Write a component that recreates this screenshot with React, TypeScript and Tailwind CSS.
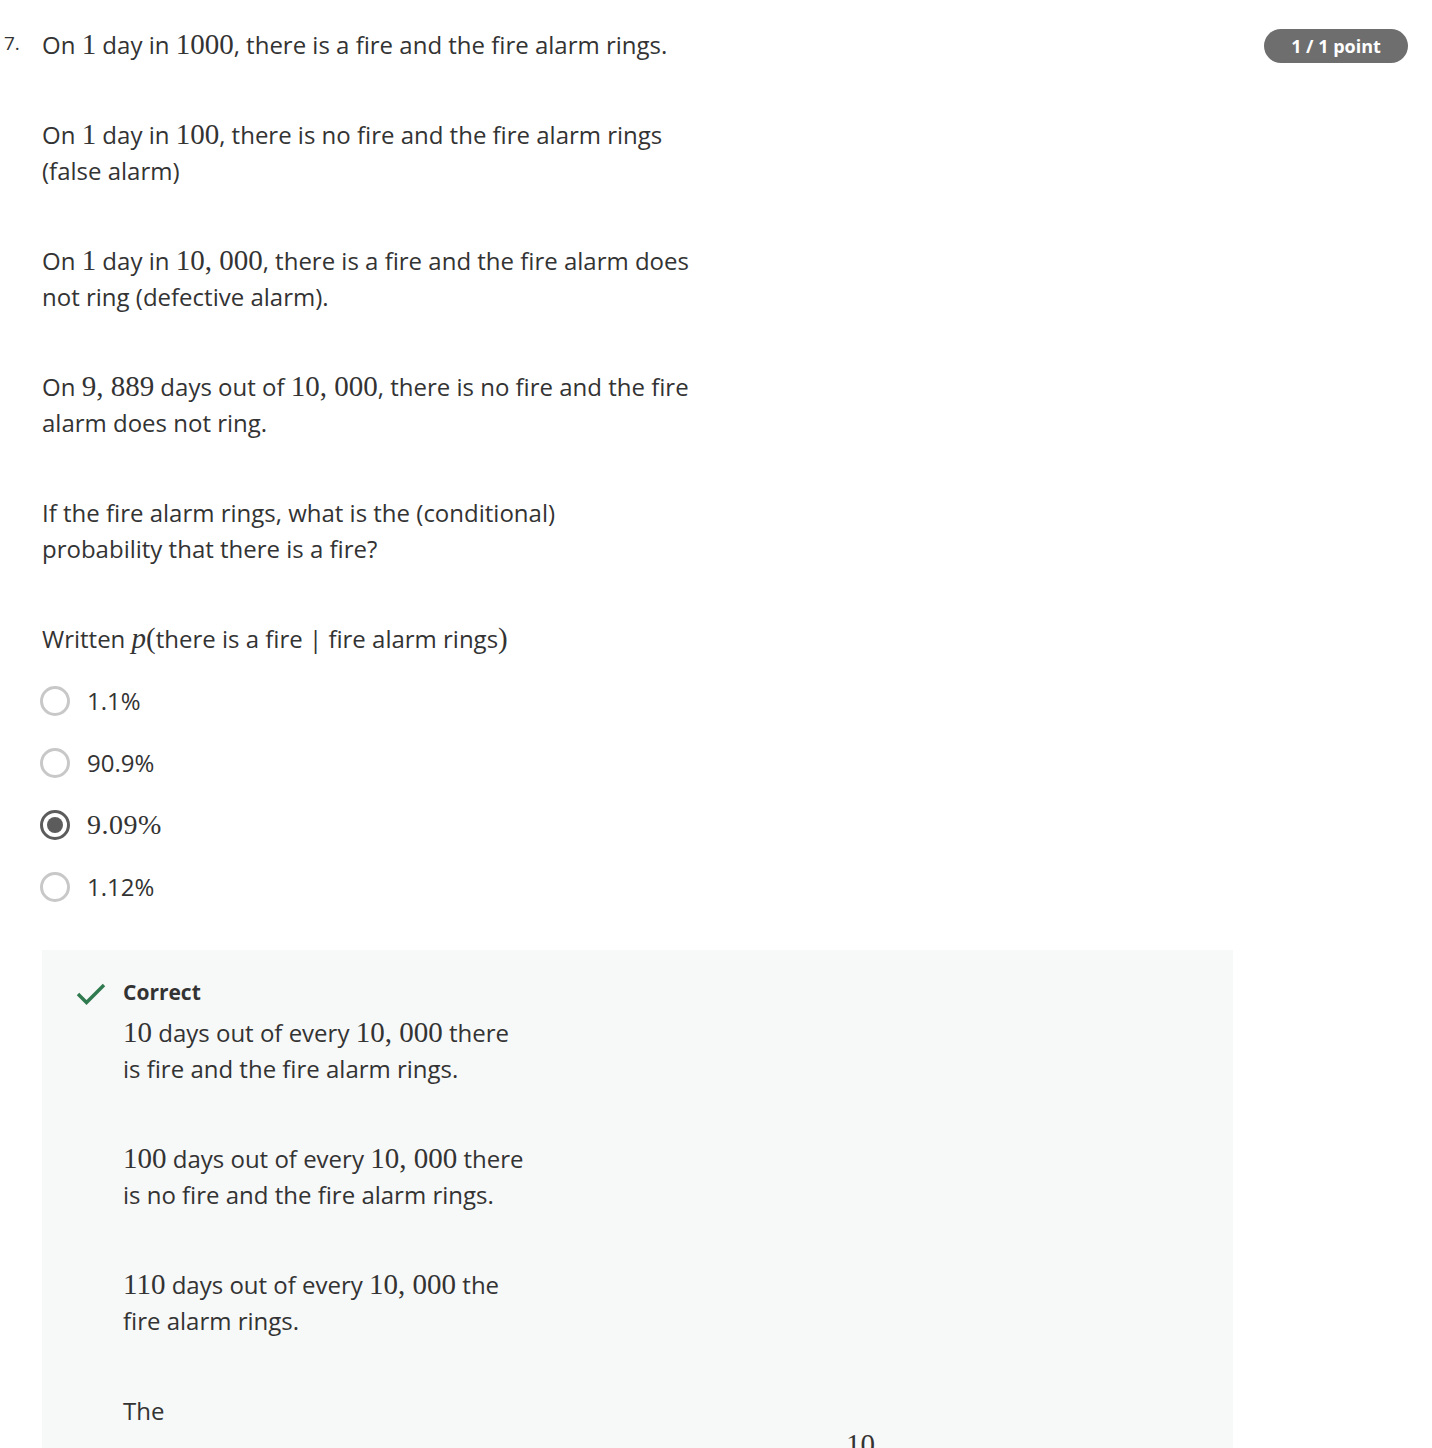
import React from "react";

const M = ({ children }: { children: React.ReactNode }) => (
  <span className="font-['Liberation_Serif',serif] text-[29px] leading-[20px]">{children}</span>
);

const OPTIONS = [
  { id: "a", label: "1.1%", math: false, checked: false },
  { id: "b", label: "90.9%", math: false, checked: false },
  { id: "c", label: "9.09%", math: true, checked: true },
  { id: "d", label: "1.12%", math: false, checked: false },
];

const Radio = ({ checked }: { checked: boolean }) =>
  checked ? (
    <span className="flex h-[30px] w-[30px] items-center justify-center rounded-full border-[3px] border-[#5c5c5c]">
      <span className="h-[16px] w-[16px] rounded-full bg-[#5c5c5c]" />
    </span>
  ) : (
    <span className="h-[30px] w-[30px] rounded-full border-[3px] border-[#c8c8c8]" />
  );

export default function App() {
  return (
    <div className="min-h-[1448px] bg-white font-['Open_Sans',sans-serif] text-[24px] leading-[36px] text-[#333333]">
      <div className="flex pt-[27px]">
        <div className="w-[42px] pl-[4px] text-[19px] leading-[32px] text-[#333]">7.</div>
        <div className="w-[1191px]">
          <div className="flex flex-col gap-[54px]">
            <p>
              On <M>1</M> day in <M>1000</M>, there is a fire and the fire alarm rings.
            </p>
            <p>
              On <M>1</M> day in <M>100</M>, there is no fire and the fire alarm rings
              <br />
              (false alarm)
            </p>
            <p>
              On <M>1</M> day in <M>10, 000</M>, there is a fire and the fire alarm does
              <br />
              not ring (defective alarm).
            </p>
            <p>
              On <M>9, 889</M> days out of <M>10, 000</M>, there is no fire and the fire
              <br />
              alarm does not ring.
            </p>
            <p>
              If the fire alarm rings, what is the (conditional)
              <br />
              probability that there is a fire?
            </p>
            <p>
              Written <M><i>p</i>(</M>there is a fire | fire alarm rings<M>)</M>
            </p>
          </div>

          <div className="mt-[13px] flex flex-col">
            {OPTIONS.map((o) => (
              <label key={o.id} className="flex h-[62px] items-center gap-[17px] -ml-[2px]">
                <Radio checked={o.checked} />
                {o.math ? (
                  <span className="font-['Liberation_Serif',serif] text-[28px] tracking-[0.5px]">{o.label}</span>
                ) : (
                  <span>{o.label}</span>
                )}
              </label>
            ))}
          </div>

          <div className="mt-[32px] bg-[#f7f8f8] pl-[34px] pt-[30px] pb-[20px]">
            <div className="flex items-start gap-[17px]">
              <svg width="30" height="24" viewBox="0 0 30 24" className="mt-[2px] shrink-0">
                <path d="M2 12 L10.5 20.5 L28 3" fill="none" stroke="#2f7a4f" strokeWidth="3.4" />
              </svg>
              <div className="flex-1">
                <div className="text-[21px] font-bold leading-[24px]">Correct</div>
                <div className="mt-[11px] flex flex-col gap-[54px]">
                  <p>
                    <M>10</M> days out of every <M>10, 000</M> there
                    <br />
                    is fire and the fire alarm rings.
                  </p>
                  <p>
                    <M>100</M> days out of every <M>10, 000</M> there
                    <br />
                    is no fire and the fire alarm rings.
                  </p>
                  <p>
                    <M>110</M> days out of every <M>10, 000</M> the
                    <br />
                    fire alarm rings.
                  </p>
                  <div>
                    <p>The</p>
                    <div className="pl-[723px] font-['Liberation_Serif',serif] text-[29px] leading-[30px]">10</div>
                  </div>
                </div>
              </div>
            </div>
          </div>
        </div>
        <div className="ml-[31px] mt-[2px] flex h-[34px] w-[144px] items-center justify-center rounded-full bg-[#6e6e6e] text-[18px] font-bold text-white">
          1 / 1 point
        </div>
      </div>
    </div>
  );
}
